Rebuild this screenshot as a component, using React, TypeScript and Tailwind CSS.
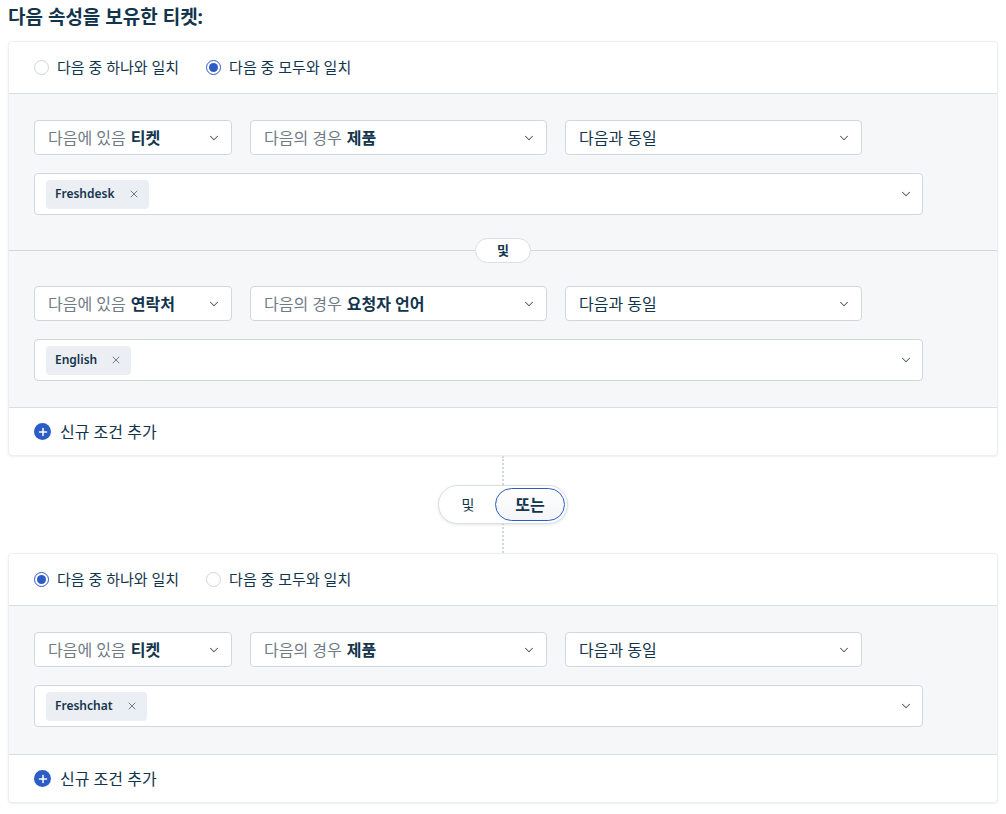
import { ChevronDown, X, Plus } from 'lucide-react'

const font = { fontFamily: '"Noto Sans", "Noto Sans CJK KR", sans-serif' }

function Radio({ checked, label }: { checked: boolean; label: string }) {
  return (
    <label className="flex items-center gap-[8px] text-[15px] text-[#12344d]">
      {checked ? (
        <span className="flex h-[15px] w-[15px] items-center justify-center rounded-full border border-[#2c5cc5] bg-white">
          <span className="h-[9px] w-[9px] rounded-full bg-[#2c5cc5]" />
        </span>
      ) : (
        <span className="h-[15px] w-[15px] rounded-full border border-[#cfd7df] bg-white" />
      )}
      <span>{label}</span>
    </label>
  )
}

function Select({ prefix, value, width }: { prefix: string; value?: string; width: string }) {
  return (
    <div className={`flex h-[35px] items-center justify-between rounded-[4px] border border-[#cfd7df] bg-white pl-[13px] pr-[10px] ${width}`}>
      <span className="text-[16px]">
        <span className={value ? 'text-[#6f7c87]' : 'text-[#12344d]'}>{prefix}</span>
        {value && <span className="ml-[5px] font-semibold text-[#12344d]">{value}</span>}
      </span>
      <ChevronDown className="h-[14px] w-[14px] text-[#475867]" strokeWidth={1.8} />
    </div>
  )
}

function Condition({ entity, field, chip }: { entity: string; field: string; chip: string }) {
  return (
    <div className="flex flex-col gap-[18px]">
      <div className="flex gap-[18px]">
        <Select prefix="다음에 있음" value={entity} width="w-[198px]" />
        <Select prefix="다음의 경우" value={field} width="w-[297px]" />
        <Select prefix="다음과 동일" width="w-[297px]" />
      </div>
      <div className="flex h-[42px] w-[889px] items-center justify-between rounded-[4px] border border-[#cfd7df] bg-white pl-[11px] pr-[9px]">
        <span className="flex h-[29px] items-center gap-[13px] rounded-[4px] bg-[#ebeef2] pl-[9px] pr-[9px] text-[12px] font-semibold text-[#12344d]">
          {chip}
          <X className="h-[12px] w-[12px] text-[#6f7c87]" strokeWidth={2} />
        </span>
        <ChevronDown className="h-[14px] w-[14px] text-[#475867]" strokeWidth={1.8} />
      </div>
    </div>
  )
}

function AddCondition() {
  return (
    <div className="flex h-[47px] items-center gap-[9px] px-[25px] text-[16px] text-[#12344d]">
      <span className="flex h-[17px] w-[17px] items-center justify-center rounded-full bg-[#2c5cc5]">
        <Plus className="h-[12px] w-[12px] text-white" strokeWidth={3} />
      </span>
      신규 조건 추가
    </div>
  )
}

export default function App() {
  return (
    <div className="min-h-screen bg-white px-[8px] pb-[12px] pt-[5px]" style={font}>
      <h1 className="mb-[12px] text-[19px] font-bold leading-[24px] text-[#12344d]">다음 속성을 보유한 티켓:</h1>

      <div className="rounded-[4px] border border-[#ebeff3] bg-white shadow-[0_1px_2px_rgba(18,52,77,0.08)]">
        <div className="flex h-[52px] items-center gap-[27px] border-b border-[#dadfe3] px-[25px]">
          <Radio checked={false} label="다음 중 하나와 일치" />
          <Radio checked label="다음 중 모두와 일치" />
        </div>
        <div className="border-b border-[#dadfe3] bg-[#f5f7f9]">
          <div className="px-[25px] pb-[35px] pt-[26px]">
            <Condition entity="티켓" field="제품" chip="Freshdesk" />
          </div>
          <div className="relative border-t border-[#cfd7df]">
            <span className="absolute left-1/2 top-[-13px] flex h-[25px] w-[56px] -translate-x-1/2 items-center justify-center rounded-full border border-[#dadfe3] bg-white text-[13px] font-semibold text-[#12344d]">
              및
            </span>
          </div>
          <div className="px-[25px] pb-[26px] pt-[35px]">
            <Condition entity="연락처" field="요청자 언어" chip="English" />
          </div>
        </div>
        <AddCondition />
      </div>

      <div className="relative flex h-[97px] items-center justify-center">
        <div className="absolute left-1/2 top-0 h-full -translate-x-[1px] border-l-2 border-dotted border-[#cfd7df]" />
        <div className="relative flex h-[39px] w-[130px] items-center rounded-full border border-[#dadfe3] bg-white p-[2px] shadow-[0_1px_3px_rgba(18,52,77,0.12)]">
          <span className="flex w-[54px] items-center justify-center text-[14px] text-[#12344d]">및</span>
          <span className="flex h-[33px] flex-1 items-center justify-center rounded-full border border-[#2c5cc5] bg-gradient-to-b from-white to-[#f3f5f7] text-[16px] font-semibold text-[#12344d]">
            또는
          </span>
        </div>
      </div>

      <div className="rounded-[4px] border border-[#ebeff3] bg-white shadow-[0_1px_2px_rgba(18,52,77,0.08)]">
        <div className="flex h-[52px] items-center gap-[27px] border-b border-[#dadfe3] px-[25px]">
          <Radio checked label="다음 중 하나와 일치" />
          <Radio checked={false} label="다음 중 모두와 일치" />
        </div>
        <div className="border-b border-[#dadfe3] bg-[#f5f7f9] px-[25px] pb-[27px] pt-[26px]">
          <Condition entity="티켓" field="제품" chip="Freshchat" />
        </div>
        <AddCondition />
      </div>
    </div>
  )
}
